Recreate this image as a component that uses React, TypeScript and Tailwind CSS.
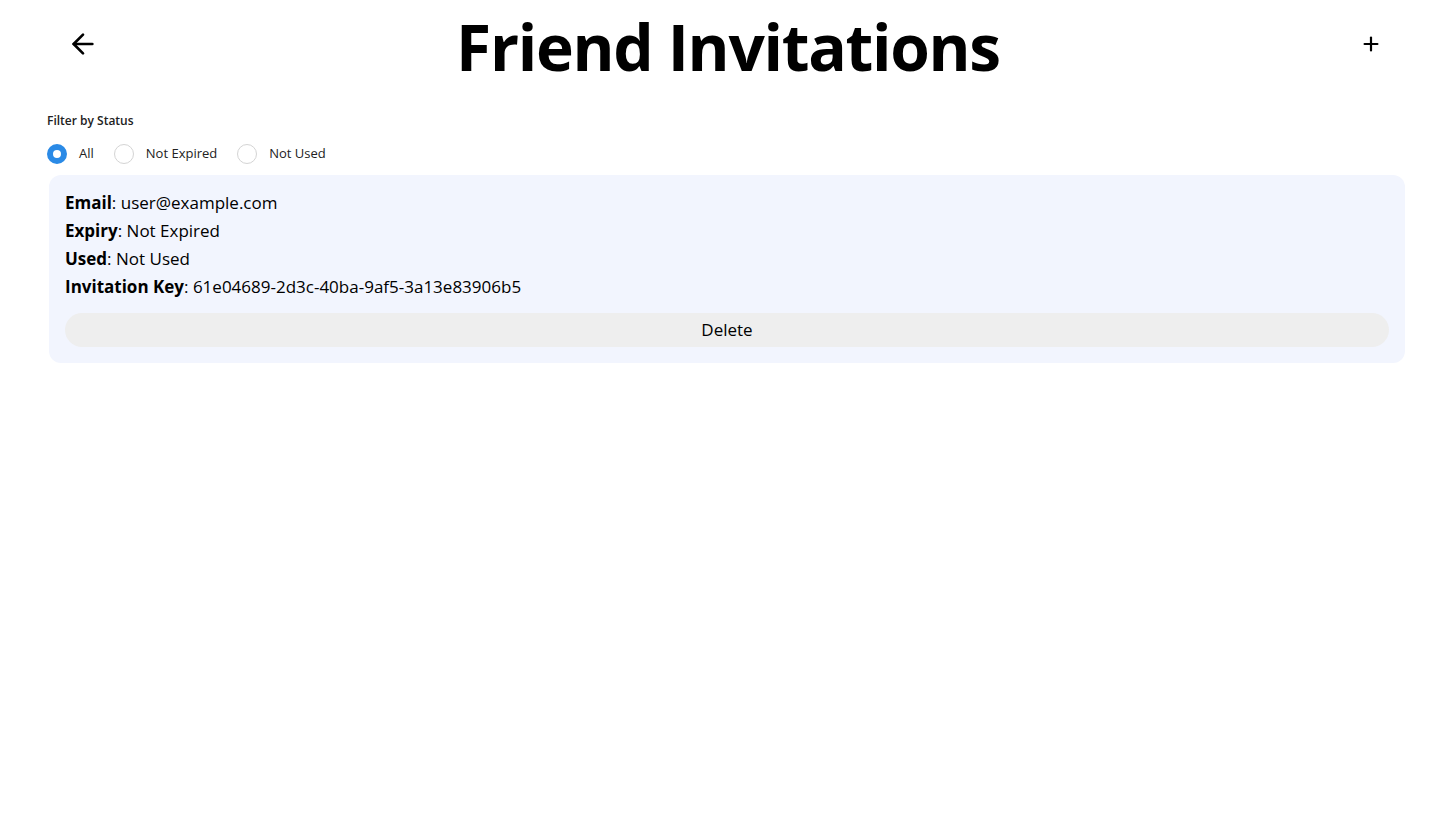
import { ArrowLeft, Plus } from 'lucide-react'
import { useState } from 'react'

/**
 * FriendInvitations - list of pending invites with a status filter
 */
export default function App() {
  const [filter, setFilter] = useState('all')

  const filters = [
    { id: 'all', label: 'All' },
    { id: 'not-expired', label: 'Not Expired' },
    { id: 'not-used', label: 'Not Used' },
  ]

  const invites = [
    {
      email: 'user@example.com',
      expiry: 'Not Expired',
      used: 'Not Used',
      key: '61e04689-2d3c-40ba-9af5-3a13e83906b5',
    },
  ]

  return (
    <div className="min-h-screen bg-white text-black font-['Open_Sans',sans-serif]">
      {/* Header */}
      <header className="flex items-center justify-between pl-[67px] pr-[46px] h-[88px]">
        <button className="w-8 h-8 flex items-center justify-center">
          <ArrowLeft size={32} strokeWidth={2} />
        </button>
        <h1 className="text-[64px] font-bold tracking-[-1.3px] leading-none mt-[6px]">Friend Invitations</h1>
        <button className="w-7 h-7 flex items-center justify-center">
          <Plus size={22} strokeWidth={2.4} />
        </button>
      </header>

      <main className="pl-[47px] pr-[26px] pt-[25px]">
        {/* Filter */}
        <p className="text-[12px] font-semibold text-[#222] leading-4">Filter by Status</p>
        <div className="flex items-center gap-5 mt-[15px]">
          {filters.map((f) => (
            <label key={f.id} className="flex items-center gap-3 cursor-pointer text-[13px] text-[#222]">
              <span
                className={
                  filter === f.id
                    ? 'w-5 h-5 rounded-full border-[6px] border-[#2a8ae6] bg-white'
                    : 'w-5 h-5 rounded-full border border-[#d4d4d4] bg-white'
                }
                onClick={() => setFilter(f.id)}
              />
              {f.label}
            </label>
          ))}
        </div>

        {/* Invites */}
        <div className="mt-[11px] ml-[2px] space-y-3">
          {invites.map((inv) => (
            <div key={inv.key} className="bg-[#f2f5fe] rounded-xl px-4 pt-[14px] pb-4">
              <div className="text-[17px] leading-7">
                <p><span className="font-bold">Email</span>: {inv.email}</p>
                <p><span className="font-bold">Expiry</span>: {inv.expiry}</p>
                <p><span className="font-bold">Used</span>: {inv.used}</p>
                <p><span className="font-bold">Invitation Key</span>: {inv.key}</p>
              </div>
              <button className="mt-3 w-full h-[34px] rounded-full bg-[#eeeeee] text-[17px]">
                Delete
              </button>
            </div>
          ))}
        </div>
      </main>
    </div>
  )
}
